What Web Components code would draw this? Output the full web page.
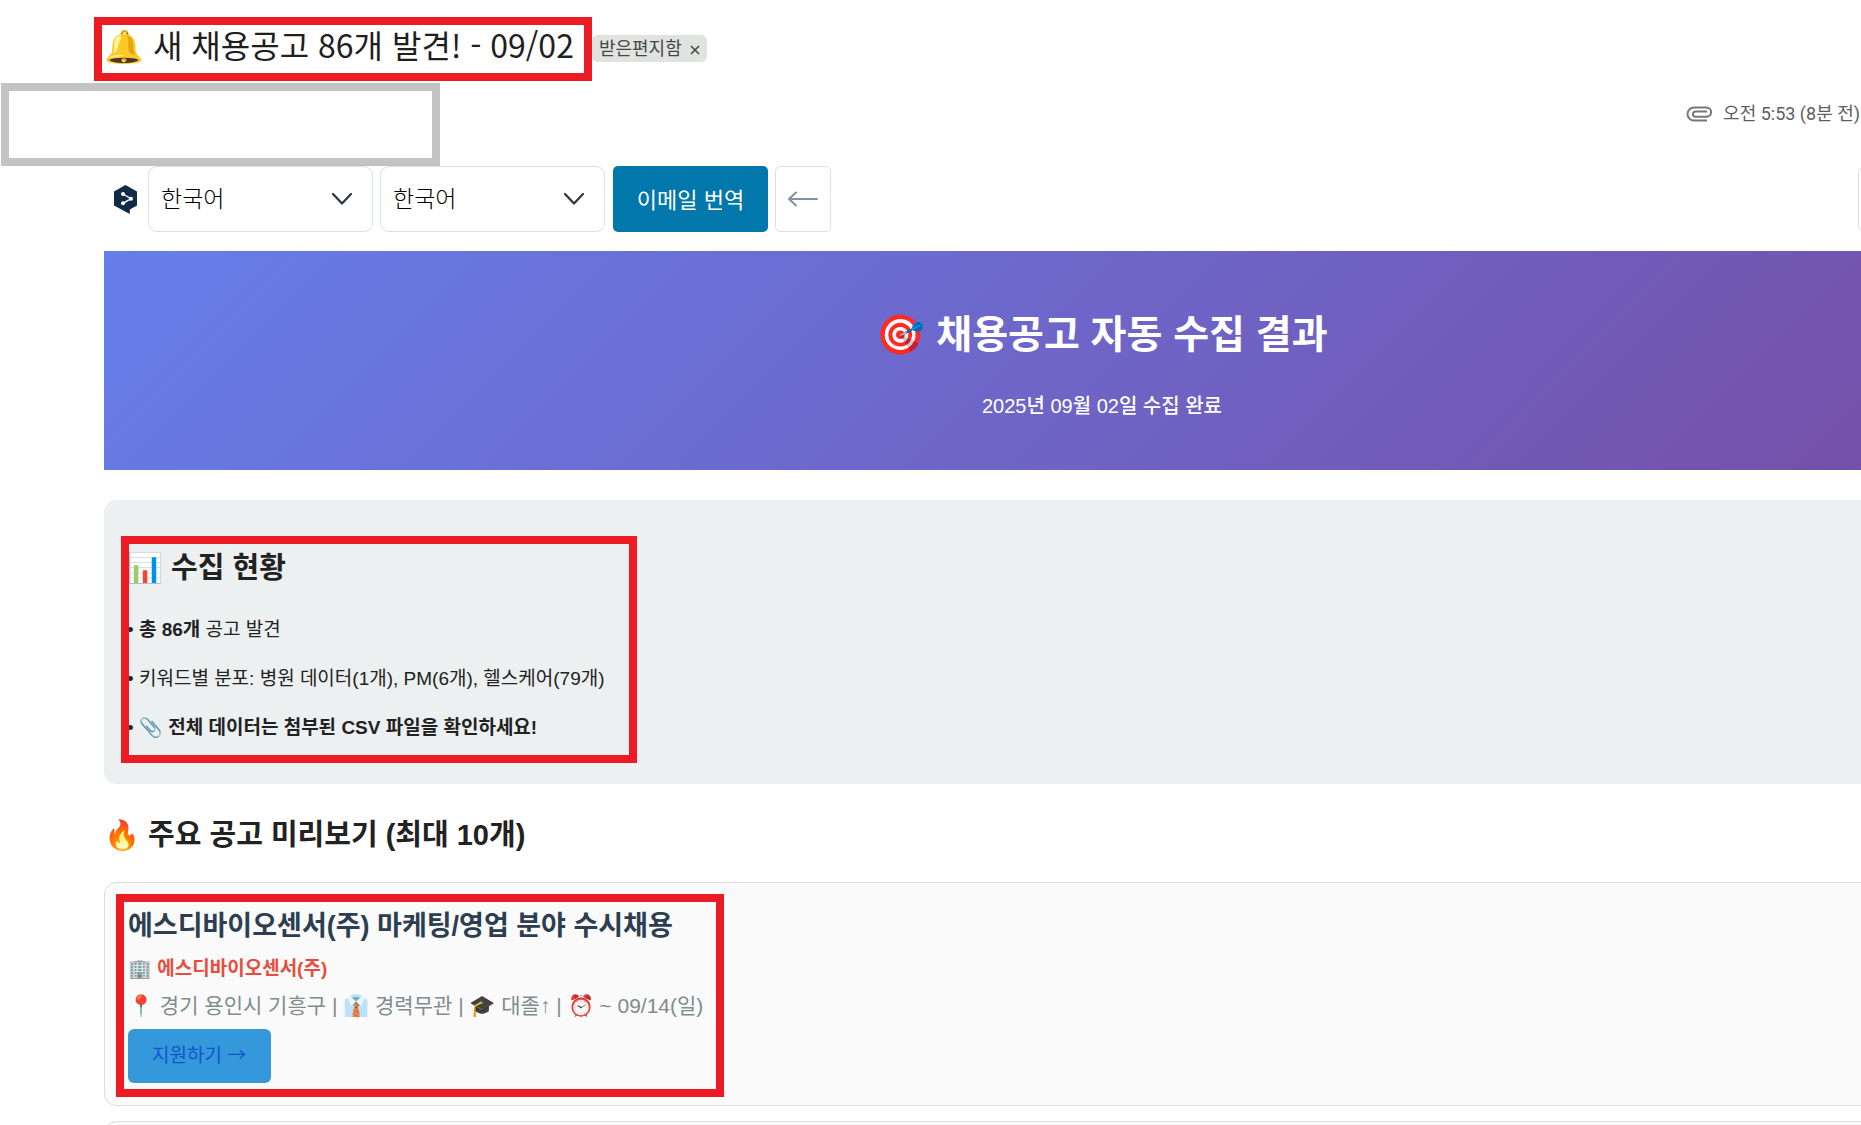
<!DOCTYPE html>
<html lang="ko">
<head>
<meta charset="utf-8">
<title>새 채용공고 86개 발견! - 09/02</title>
<style>
  html { overflow: hidden; }
  body { margin: 0; background: #fff; color: #222; font-family: "Liberation Sans", "Noto Sans CJK KR", sans-serif; font-size: 19px; line-height: 29px; }
</style>
</head>
<body>
<mail-page></mail-page>
<script>
const define = (name, html, setup) => {
  const tpl = document.createElement('template');
  tpl.innerHTML = html;
  customElements.define(name, class extends HTMLElement {
    constructor() {
      super();
      this.attachShadow({ mode: 'open' }).append(tpl.content.cloneNode(true));
    }
    connectedCallback() { if (setup) setup(this, this.shadowRoot); }
  });
};

/* Red outline drawn over whatever is slotted in */
define('red-frame', `
<style>
  :host { display: block; position: relative; width: fit-content; }
  .line { position: absolute; inset: var(--inset, 0); border: 8px solid #ed1c24; pointer-events: none; }
</style>
<slot></slot><div class="line"></div>`);

define('mail-subject', `
<style>
  :host { display: flex; align-items: flex-start; padding: 17px 0 0 94px; }
  h1 { margin: 0; box-sizing: border-box; height: 64px; padding: 5px 18px 0 10px; font-family: "Noto Sans CJK KR", sans-serif; font-size: 32px; line-height: 44px; font-weight: 400; color: #1f1f1f; white-space: nowrap; }
  .chip { display: flex; align-items: center; gap: 8px; height: 27px; margin-top: 18px; padding: 0 7px; border-radius: 6px; background: #e1e3e1; color: #444746; font-family: "Noto Sans CJK KR", sans-serif; font-size: 18px; line-height: 24px; }
  .chip span { align-self: flex-start; }
  button { border: 0; padding: 2px 0 0; background: none; display: flex; color: inherit; }
</style>
<red-frame><h1><slot></slot></h1></red-frame>
<div class="chip"><span>받은편지함</span><button aria-label="라벨 삭제"><svg width="10" height="10" viewBox="0 0 10 10"><path d="M1 1l8 8M9 1l-8 8" stroke="currentColor" stroke-width="1.6"/></svg></button></div>`);

define('sender-row', `
<style>
  :host { display: flex; justify-content: space-between; align-items: flex-start; margin-top: 2px; padding: 0 1px; }
  .blank { box-sizing: border-box; width: 439px; height: 83px; border: 8px solid #c3c3c3; }
  .time { display: flex; align-items: center; gap: 11px; margin-top: 18px; color: #5e5e5e; font-family: Roboto, "Noto Sans CJK KR", sans-serif; font-size: 18px; line-height: 26px; }
</style>
<div class="blank"></div>
<div class="time">
  <svg width="26" height="16" viewBox="0 0 26 16" fill="none" stroke="#747775" stroke-width="2"><path d="M21 14.5H8A6.5 6.5 0 0 1 8 1.500h12.500a4.600 4.600 0 0 1 0 9.200H9.500a2.600 2.600 0 0 1 0-5.200H21"/></svg>
  <span>오전 5:53 (8분 전)</span>
</div>`);

define('language-select', `
<style>
  :host { display: grid; width: 225px; height: 66px; }
  select { grid-area: 1/1; appearance: none; box-sizing: border-box; width: 100%; height: 100%; padding: 0 50px 5px 12px; border: 1px solid #dae1e8; border-radius: 9px; background: #fff; color: #000; font: 300 23px "Noto Sans CJK KR", sans-serif; }
  svg { grid-area: 1/1; place-self: center end; margin-right: 20px; pointer-events: none; }
</style>
<select><option>한국어</option></select>
<svg width="22" height="14" viewBox="0 0 22 14" fill="none" stroke="#2b3440" stroke-width="2.200" stroke-linecap="round" stroke-linejoin="round"><path d="M2 2l9 9.500L20 2"/></svg>`,
(el, root) => root.querySelector('select').setAttribute('aria-label', el.getAttribute('label')));

define('translate-bar', `
<style>
  :host { display: flex; align-items: center; height: 66px; padding-left: 114px; }
  .logo { margin-right: 11px; }
  language-select { margin-right: 7px; }
  button { box-sizing: border-box; height: 66px; border-radius: 5px; font-family: "Noto Sans CJK KR", sans-serif; }
  .go { width: 155px; margin: 0 7px 0 1px; padding: 0 0 2px; border: 0; background: #0277ab; color: #fff; font-size: 22px; }
  .back { width: 56px; padding: 0; border: 1px solid #dae1e8; background: #fff; display: grid; place-items: center; }
  .more { width: 56px; margin: 0 -53px 0 auto; border: 1px solid #dcdcdc; border-radius: 7px; background: #fff; flex: none; }
</style>
<svg class="logo" width="23" height="29" viewBox="0 0 23 29"><path fill="#0f2b46" d="M11.500 0L23 6.500v14L15.800 24.500V29L0 20.500v-14z"/><g stroke="#fff" stroke-width="1.400" fill="none"><path d="M9 9l8 4.700L9 18.300"/></g><g fill="#fff"><circle cx="9" cy="9" r="2"/><circle cx="17" cy="13.700" r="2"/><circle cx="9" cy="18.300" r="2"/></g></svg>
<language-select label="원본 언어"></language-select>
<language-select label="대상 언어"></language-select>
<button class="go">이메일 번역</button>
<button class="back" aria-label="뒤로"><svg width="30" height="16" viewBox="0 0 30 16" fill="none" stroke="#84919f" stroke-width="2" stroke-linecap="round" stroke-linejoin="round"><path d="M29 8H1M8 1.500L1 8l7 6.500"/></svg></button>
<button class="more" aria-label="더보기"></button>`);

define('result-banner', `
<style>
  :host { display: block; box-sizing: border-box; height: 219px; padding-top: 55px; text-align: center; color: #fff; background: linear-gradient(135deg, #667eea 0%, #764ba2 100%); }
  h1 { margin: 0; font-size: 39px; line-height: 58px; }
  p { margin: 28px 0 0; font-size: 20px; font-weight: 500; line-height: 29px; }
</style>
<h1><slot name="title"></slot></h1><p><slot></slot></p>`);

define('status-panel', `
<style>
  :host { display: block; box-sizing: border-box; height: 284px; margin-top: 30px; padding: 46px 23px 0; border-radius: 12px; background: #ecf0f1; }
  h2 { margin: 0 0 25px; font-size: 29px; line-height: 44px; }
  ul { list-style: none; margin: 0; padding: 0 31px 0 0; display: grid; gap: 20px; }
  li::before { content: "• "; }
  red-frame { --inset: -10px -1px -21px -6px; }
</style>
<red-frame>
  <h2>📊 수집 현황</h2>
  <ul>
    <li><b>총 86개</b> 공고 발견</li>
    <li>키워드별 분포: 병원 데이터(1개), PM(6개), 헬스케어(79개)</li>
    <li>📎 <b>전체 데이터는 첨부된 CSV 파일을 확인하세요!</b></li>
  </ul>
</red-frame>`);

define('job-card', `
<style>
  :host { display: block; box-sizing: border-box; min-height: 224px; margin-bottom: 15px; padding: 23px 23px 21px; border: 1px solid #ddd; border-radius: 12px; background: #fafafa; }
  h3 { margin: 0; color: #2c3e50; font-size: 27px; line-height: 40px; }
  .company { margin-top: 8px; color: #e74c3c; font-weight: 700; }
  .meta { margin-top: 7px; color: #7f8c8d; font-size: 21px; line-height: 32px; }
  a { display: inline-block; margin-top: 7px; padding: 12px 25px 13px 24px; border-radius: 6px; background: #3498db; color: #15c; text-decoration: none; }
  a span { font-family: "Noto Sans CJK KR", sans-serif; line-height: 1; }
  red-frame { --inset: -12px -21px -14px -12px; }
</style>
<red-frame>
  <h3><slot name="title"></slot></h3>
  <div class="company"><slot name="company"></slot></div>
  <div class="meta"><slot name="meta"></slot></div>
  <a href="#">지원하기 <span>→</span></a>
</red-frame>`);

define('blank-card', `
<style>:host { display: block; height: 224px; border: 1px solid #ddd; border-radius: 12px; background: #fafafa; }</style>`);

define('mail-page', `
<style>
  :host { display: block; height: 100vh; overflow: hidden; }
  main { margin: 19px -239px 0 104px; }
  h2 { margin: 29px 0 25px; font-size: 29px; line-height: 44px; }
</style>
<mail-subject>🔔 새 채용공고 86개 발견! - 09/02</mail-subject>
<sender-row></sender-row>
<translate-bar></translate-bar>
<main>
  <result-banner><span slot="title">🎯 채용공고 자동 수집 결과</span>2025년 09월 02일 수집 완료</result-banner>
  <status-panel></status-panel>
  <h2>🔥 주요 공고 미리보기 (최대 10개)</h2>
  <job-card>
    <span slot="title">에스디바이오센서(주) 마케팅/영업 분야 수시채용</span>
    <span slot="company">🏢 에스디바이오센서(주)</span>
    <span slot="meta">📍 경기 용인시 기흥구 | 👔 경력무관 | 🎓 대졸↑ | ⏰ ~ 09/14(일)</span>
  </job-card>
  <blank-card></blank-card>
</main>`);
</script>
</body>
</html>
